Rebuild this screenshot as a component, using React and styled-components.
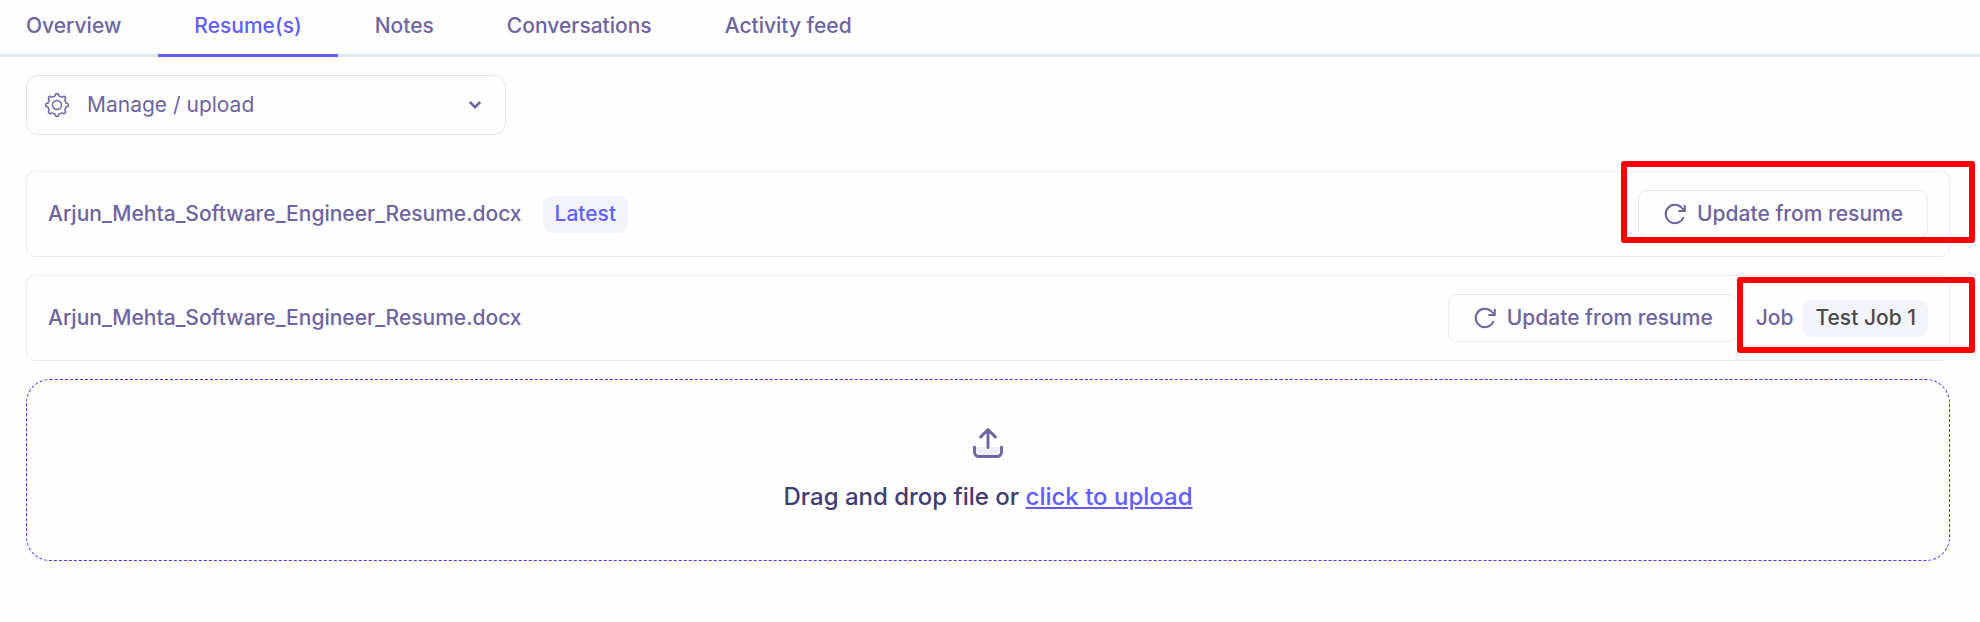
import React from 'react';
import styled, { createGlobalStyle, css } from 'styled-components';

const ink = '#6e64a0';
const accent = '#625dff';

const GlobalStyle = createGlobalStyle`
  *, *::before, *::after { box-sizing: border-box; }
  body {
    margin: 0;
    background: #fefefe;
    color: ${ink};
    font: 500 21px/30px Inter, sans-serif;
    overflow-x: hidden;
  }
  button, select { font: inherit; color: inherit; }
`;

const TabBar = styled.nav`
  display: flex;
  gap: 1px;
  padding-right: 30px;
  box-shadow: inset 0 -3px 0 #e1e8f0;
`;

const Tab = styled.a`
  padding: 11px 36px 13px;
  border-bottom: 3px solid ${({ $active }) => ($active ? accent : 'transparent')};
  color: ${({ $active }) => ($active ? accent : ink)};
  text-decoration: none;
  white-space: nowrap;

  &:first-child { padding-left: 26px; }
`;

const Content = styled.main`
  display: flex;
  flex-direction: column;
  gap: 18px;
  padding: 18px 30px 60px 26px;
`;

const SelectBox = styled.label`
  display: grid;
  grid-template-columns: 24px 1fr 12px;
  align-items: center;
  width: 480px;
  max-width: 100%;
  height: 60px;
  margin-bottom: 18px;
  padding: 0 24px 0 18px;
  border: 1px solid #e4e4e6;
  border-radius: 12px;

  > svg { grid-row: 1; pointer-events: none; }
  > svg:first-child { grid-column: 1; }
  > svg:last-child { grid-column: 3; }
`;

const Select = styled.select`
  grid-row: 1;
  grid-column: 1 / -1;
  height: 58px;
  padding: 0 24px 0 42px;
  border: 0;
  background: transparent;
  appearance: none;
  font-weight: 400;
`;

const List = styled.ul`
  display: flex;
  flex-direction: column;
  gap: 18px;
  margin: 0;
  padding: 0;
  list-style: none;
`;

const ResumeRow = styled.li`
  position: relative;
  display: flex;
  align-items: center;
  gap: 21px;
  min-height: 86px;
  padding: 18px 21px;
  border: 1px solid #e9e7f3;
  border-radius: 9px;
`;

const Actions = styled.div`
  display: flex;
  align-items: center;
  gap: 18px;
  margin-left: auto;
`;

const UpdateButton = styled.button`
  display: flex;
  align-items: center;
  gap: 10px;
  height: 48px;
  padding: 0 24px;
  border: 1px solid #e9e7f3;
  border-radius: 9px;
  background: #fefefe;
  white-space: nowrap;
`;

const Badge = styled.span`
  padding: 3px 12px 4px;
  border-radius: 9px;
  background: #f3f4fa;
  color: ${({ $tone }) => ($tone === 'accent' ? accent : '#4a4a4a')};
  white-space: nowrap;
`;

const JobInfo = styled.div`
  display: flex;
  align-items: center;
  gap: 10px;
`;

const Highlight = styled.div`
  position: absolute;
  right: -26px;
  border: 6px solid #ff0000;
  border-radius: 3px;
  pointer-events: none;
  ${({ $wide }) =>
    $wide
      ? css`top: -11px; width: 354px; height: 82px;`
      : css`top: 1px; width: 238px; height: 76px;`}
`;

const DropZone = styled.section`
  display: flex;
  flex-direction: column;
  align-items: center;
  gap: 21px;
  padding: 48px 24px 45px;
  border: 1px dashed #4f35e8;
  border-radius: 24px;
`;

const DropText = styled.p`
  margin: 0;
  color: #433c73;
  font-size: 24px;
  line-height: 36px;
`;

const UploadLink = styled.a`
  color: ${accent};
`;

const petals = 8;
const gearPath = Array.from({ length: petals }, (_, i) => {
  const at = (r, deg) => {
    const a = ((i * 45 + deg - 90) * Math.PI) / 180;
    return `${(12 + r * Math.cos(a)).toFixed(2)} ${(12 + r * Math.sin(a)).toFixed(2)}`;
  };
  return `${i === 0 ? 'M' : 'L'}${at(11.2, -6)}Q${at(11.6, 0)} ${at(11.2, 6)}L${at(9.4, 12)}Q${at(8.8, 22.5)} ${at(9.4, 33)}`;
}).join('') + 'Z';

const GearIcon = () => (
  <svg width="24" height="24" viewBox="0 0 24 24" fill="none" stroke={ink} strokeWidth="1.5" strokeLinejoin="round" aria-hidden="true">
    <path d={gearPath} />
    <circle cx="12" cy="12" r="4.5" />
  </svg>
);

const ChevronIcon = () => (
  <svg width="12" height="8" viewBox="0 0 12 8" fill="none" stroke={ink} strokeWidth="2.5" aria-hidden="true">
    <path d="M.8 1 6 6.2 11.2 1" />
  </svg>
);

const RefreshIcon = () => (
  <svg width="24" height="24" viewBox="0 0 24 24" fill="none" stroke={ink} strokeWidth="2" aria-hidden="true">
    <path d="M20.6 15A9.2 9.2 0 1 1 18.6 5.6L21.4 8.4" />
    <path d="M21.8 3v6h-6.4" />
  </svg>
);

const UploadIcon = () => (
  <svg width="30" height="30" viewBox="0 0 30 30" fill="none" stroke={ink} strokeWidth="2.9" strokeLinecap="round" strokeLinejoin="round" aria-hidden="true">
    <path d="M2 19h26v5.5a4 4 0 0 1-4 4H6a4 4 0 0 1-4-4Z" fill="#efedf5" stroke="none" />
    <path d="M1.5 19.3v5a4.2 4.2 0 0 0 4.2 4.2h18.6a4.2 4.2 0 0 0 4.2-4.2v-5M15 19.5V1.6M7.6 9 15 1.6 22.4 9" />
  </svg>
);

const tabs = ['Overview', 'Resume(s)', 'Notes', 'Conversations', 'Activity feed'];

const resumes = [
  { id: 1, file: 'Arjun_Mehta_Software_Engineer_Resume.docx', latest: true },
  { id: 2, file: 'Arjun_Mehta_Software_Engineer_Resume.docx', job: 'Test Job 1' },
];

export default function App() {
  return (
    <>
      <GlobalStyle />
      <TabBar>
        {tabs.map((name) => (
          <Tab key={name} href="#" $active={name === 'Resume(s)'} aria-current={name === 'Resume(s)' ? 'page' : undefined}>
            {name}
          </Tab>
        ))}
      </TabBar>
      <Content>
        <SelectBox>
          <GearIcon />
          <Select aria-label="Manage / upload">
            <option>Manage / upload</option>
          </Select>
          <ChevronIcon />
        </SelectBox>
        <List>
          {resumes.map(({ id, file, latest, job }) => (
            <ResumeRow key={id}>
              <span>{file}</span>
              {latest && <Badge $tone="accent">Latest</Badge>}
              <Actions>
                <UpdateButton type="button">
                  <RefreshIcon />
                  Update from resume
                </UpdateButton>
                {job && (
                  <JobInfo>
                    <span>Job</span>
                    <Badge>{job}</Badge>
                  </JobInfo>
                )}
              </Actions>
              <Highlight $wide={latest} />
            </ResumeRow>
          ))}
        </List>
        <DropZone>
          <UploadIcon />
          <DropText>
            Drag and drop file or <UploadLink href="#">click to upload</UploadLink>
          </DropText>
        </DropZone>
      </Content>
    </>
  );
}
